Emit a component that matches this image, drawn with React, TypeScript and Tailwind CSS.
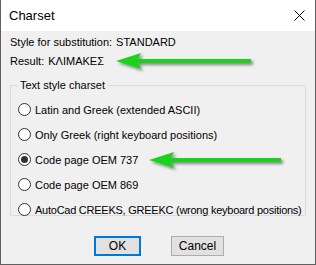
import React from "react";

const options = [
  { label: "Latin and Greek (extended ASCII)", checked: false },
  { label: "Only Greek (right keyboard positions)", checked: false },
  { label: "Code page OEM 737", checked: true },
  { label: "Code page OEM 869", checked: false },
  { label: "AutoCad CREEKS, GREEKC (wrong keyboard positions)", checked: false, tight: true },
];

function Radio({ label, checked, tight }: { label: string; checked: boolean; tight?: boolean }) {
  return (
    <div className="flex h-[25px] items-center">
      <span className="ml-[7px] flex h-[13px] w-[13px] shrink-0 items-center justify-center rounded-full border border-[#333] bg-white">
        {checked && <span className="h-[7px] w-[7px] rounded-full bg-[#333]" />}
      </span>
      <span className={tight ? "ml-[4px] whitespace-nowrap tracking-[-0.25px]" : "ml-[4px] whitespace-nowrap"}>
        {label}
      </span>
    </div>
  );
}

// green annotation arrow, tip on the left
function Arrow({ x, y, len }: { x: number; y: number; len: number }) {
  return (
    <svg
      className="pointer-events-none absolute"
      style={{ left: x - 4, top: y - 12 }}
      width={len + 12}
      height={26}
      aria-hidden
    >
      <defs>
        <filter id={`sh${x}`} x="-20%" y="-50%" width="140%" height="200%">
          <feDropShadow dx="2" dy="2" stdDeviation="1.5" floodColor="#000" floodOpacity="0.45" />
        </filter>
      </defs>
      <path
        d={`M4 12 L29 4 L26 10 L${len + 4} 10 L${len + 4} 14 L26 14 L29 20 Z`}
        fill="#1fd11f"
        filter={`url(#sh${x})`}
      />
    </svg>
  );
}

export default function App() {
  return (
    <div
      className="relative flex h-[265px] w-[316px] flex-col overflow-hidden border-x border-b border-[#5f5f5f] bg-[#f0f0f0] text-[11px] leading-[14px] text-black"
      style={{ fontFamily: '"Liberation Sans", Arial, sans-serif' }}
    >
      <div className="flex h-[31px] shrink-0 items-center justify-between bg-white pl-[8px] pr-[10px]">
        <span className="text-[13px]">Charset</span>
        <svg width="11" height="11" viewBox="0 0 11 11" aria-hidden>
          <path d="M0.5 0.5 L10.5 10.5 M10.5 0.5 L0.5 10.5" stroke="#000" strokeWidth="1" />
        </svg>
      </div>

      <div className="flex flex-col px-[9px] pt-[1px]">
        <div className="flex h-[19px] items-center gap-[4px]">
          <span>Style for substitution:</span>
          <span>STANDARD</span>
        </div>
        <div className="flex h-[19px] items-center gap-[4px]">
          <span>Result:</span>
          <span>ΚΛΙΜΑΚΕΣ</span>
        </div>
      </div>

      <fieldset className="mx-[9px] mt-[8px] h-[138px] shrink-0 border border-[#dcdcdc] pt-[5px]">
        <legend className="ml-[7px] px-[2px]">Text style charset</legend>
        {options.map((o) => (
          <Radio key={o.label} {...o} />
        ))}
      </fieldset>

      <div className="mt-[20px] flex justify-center gap-[30px] pl-[2px]">
        <button className="h-[20px] w-[47px] border-2 border-[#0078d7] bg-[#e1e1e1] text-[12px]">OK</button>
        <button className="h-[20px] w-[53px] border border-[#adadad] bg-[#e1e1e1] text-[12px]">Cancel</button>
      </div>

      <Arrow x={115} y={61} len={135} />
      <Arrow x={148} y={160} len={132} />
    </div>
  );
}
